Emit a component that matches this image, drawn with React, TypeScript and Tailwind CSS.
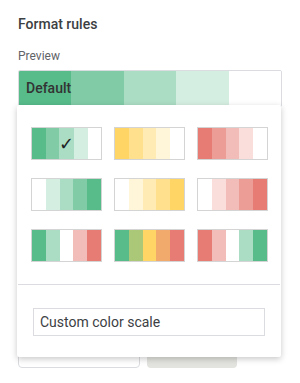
const G = ["#57bb8a", "#81cca7", "#abddc4", "#d5eee2", "#ffffff"];
const Y = ["#ffd666", "#ffe08c", "#ffebb3", "#fff5d9", "#ffffff"];
const R = ["#e67c73", "#ec9d96", "#f2bdb9", "#f9dedc", "#ffffff"];

const scales: string[][] = [
  G,
  Y,
  R,
  [...G].reverse(),
  [...Y].reverse(),
  [...R].reverse(),
  ["#57bb8a", "#abddc4", "#ffffff", "#f2bdb9", "#e67c73"],
  ["#57bb8a", "#abc878", "#ffd666", "#f2a96c", "#e67c73"],
  ["#e67c73", "#f2bdb9", "#ffffff", "#abddc4", "#57bb8a"],
];

function Swatch({ colors, selected }: { colors: string[]; selected?: boolean }) {
  return (
    <div className="flex h-[33px] w-[71px] border border-[#d4d4d4]">
      {colors.map((c, i) => (
        <div key={i} className="relative flex flex-1 items-center justify-center" style={{ background: c }}>
          {selected && i === 2 && (
            <span className="text-[18px] leading-none text-[#202124]">✓</span>
          )}
        </div>
      ))}
    </div>
  );
}

export default function App() {
  return (
    <div className="h-[383px] w-[300px] bg-white px-[18px] pt-[14px] font-['Roboto',sans-serif]">
      <h2 className="text-[14px] font-medium leading-[20px] text-[#3c4043]">Format rules</h2>
      <p className="mt-[14px] text-[12px] leading-[16px] text-[#5f6368]">Preview</p>

      <div className="relative mt-[6px]">
        <div className="flex h-[37px] overflow-hidden rounded-[2px] border border-[#dadce0]">
          {G.map((c, i) => (
            <div key={i} className="flex-1" style={{ background: c }} />
          ))}
          <span className="absolute left-[8px] top-[8px] text-[14px] font-medium leading-[20px] text-[#333333]">
            Default
          </span>
        </div>

        {/* buttons under the dropdown */}
        <div className="mt-[227px] flex gap-[7px]">
          <div className="h-[34px] w-[122px] rounded-[4px] border border-[#dadce0] bg-white" />
          <div className="h-[34px] w-[90px] rounded-[4px] bg-[#e3e3df]" />
        </div>

        <div className="absolute left-[-1px] top-[35px] w-[264px] rounded-[2px] bg-white shadow-[0_2px_6px_rgba(0,0,0,0.22)]">
          <div className="grid grid-cols-3 gap-x-[13px] gap-y-[18px] px-[14px] pb-[22px] pt-[22px]">
            {scales.map((s, i) => (
              <Swatch key={i} colors={s} selected={i === 0} />
            ))}
          </div>
          <div className="mx-px h-px bg-[#dadce0]" />
          <div className="px-[16px] pb-[21px] pt-[23px]">
            <div className="flex h-[28px] items-center border border-[#dadce0] px-[6px] text-[14px] text-[#3c4043]">
              Custom color scale
            </div>
          </div>
        </div>
      </div>
    </div>
  );
}
